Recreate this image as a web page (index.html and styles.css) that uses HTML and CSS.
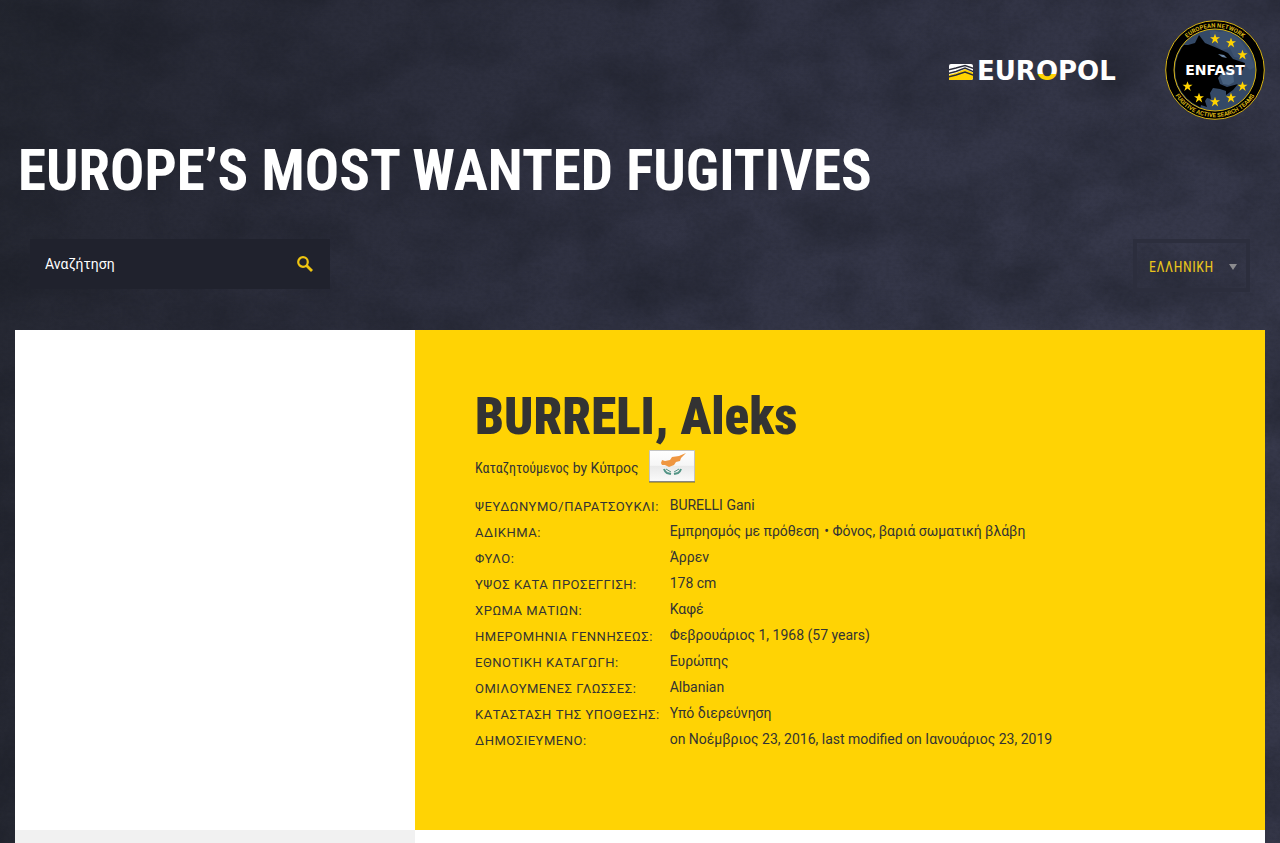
FILE: index.html
```html
<!DOCTYPE html>
<html lang="el">
<head>
<meta charset="utf-8">
<meta name="viewport" content="width=device-width, initial-scale=1">
<title>BURRELI, Aleks</title>
<link rel="stylesheet" href="styles.css">
</head>
<body>
<svg class="texture" aria-hidden="true">
  <filter id="stone" x="0" y="0" width="100%" height="100%" color-interpolation-filters="sRGB">
    <feTurbulence type="fractalNoise" baseFrequency="0.012 0.016" numOctaves="8" seed="8"/>
    <feColorMatrix values="0 0 0 0 0.08  0 0 0 0 0.09  0 0 0 0 0.12  0.8 0 0 0 -0.28"/>
  </filter>
  <filter id="grain" x="0" y="0" width="100%" height="100%" color-interpolation-filters="sRGB">
    <feTurbulence type="fractalNoise" baseFrequency="0.22 0.3" numOctaves="3" seed="3"/>
    <feColorMatrix values="0 0 0 0 0.08  0 0 0 0 0.09  0 0 0 0 0.12  0.25 0 0 0 -0.08"/>
  </filter>
  <rect width="100%" height="100%" filter="url(#stone)"/>
  <rect width="100%" height="100%" filter="url(#grain)"/>
</svg>
<div class="page">
  <header class="header">
    <div class="logos">
      <a class="logo" href="#europol" aria-label="Europol">
        <svg width="176" height="36" viewBox="0 0 176 36">
          <defs>
            <linearGradient id="oFill" x1="0" y1="0" x2="0" y2="1"><stop offset=".6" stop-color="#fff"/><stop offset=".6" stop-color="#ffd300"/></linearGradient>
            <clipPath id="mark"><path d="M3 12h20q2 0 2 2v12q0 2-2 2H1V14q0-2 2-2z"/></clipPath>
          </defs>
          <g clip-path="url(#mark)">
            <path fill="#fff" d="M0 11h26v18H0z"/>
            <path fill="#ffd300" d="M0 23l8-2 9-4 9 4v8H0z"/>
            <path fill="none" stroke="#292b39" stroke-width="1.400" d="M0 18l8-2 9-2.500 9 3M0 21.500l8-2 9-3.500 9 4M0 25l8-2 9-3 9 3.500"/>
          </g>
          <text class="wordmark" x="29" y="28">EUR<tspan fill="url(#oFill)">O</tspan>POL</text>
        </svg>
      </a>
      <a class="logo" href="#enfast" aria-label="ENFAST">
        <svg width="100" height="100" viewBox="0 0 100 100">
          <defs>
            <path id="star" d="M0-5.300 1.300-1.700H5L2 .6l1.200 3.800L0 2.100l-3.200 2.300L-2 .6-5-1.700h3.700z"/>
            <path id="arcTop" d="M7.500 50a42.500 42.500 0 0 1 85 0"/>
            <path id="arcBottom" d="M2.800 50a47.200 47.200 0 0 0 94.400 0"/>
            <clipPath id="disc"><circle cx="50" cy="50" r="40"/></clipPath>
          </defs>
          <circle cx="50" cy="50" r="49.300" fill="#000" stroke="#d8b414"/>
          <circle cx="50" cy="50" r="41" fill="#344966" stroke="#d8b414"/>
          <g clip-path="url(#disc)">
            <path fill="#3d5270" d="M44 9l10 3 9-1 12 9 10 15 5 12-5 3-6-6-3-6-7-1-4-9-8 2-7-5-4-7z"/>
            <path fill="#000" d="M8 27l8 1-1-3 8 0 7-2 4-8 6 8 12 5 11 5 5 6 12 4-1 4-2 4-2-5-5 1-13 5-4 6 2 6 7 3 11-3-5 6-7 5v-4l-6-2-7-1-3 5 1 6-4-1-2 3 2 6-6-2-2 10H5z"/>
            <path fill="#6b86a6" d="M53 34l6 1 3 3-5-1z"/>
            <path fill="#48617f" d="M55 56l8-5 5 1 1 10-5 3-6-1z"/>
          </g>
          <text class="seal-name" x="50" y="55">ENFAST</text>
          <g fill="#ffd300">
            <use href="#star" x="50" y="19"/><use href="#star" x="66" y="23"/><use href="#star" x="77.500" y="35"/>
            <use href="#star" x="22.500" y="66.500"/><use href="#star" x="34" y="78"/><use href="#star" x="50" y="82"/>
            <use href="#star" x="66" y="78"/><use href="#star" x="77.500" y="66.500"/>
          </g>
          <text class="seal-ring"><textPath href="#arcTop" startOffset="50%">EUROPEAN NETWORK</textPath></text>
          <text class="seal-ring"><textPath href="#arcBottom" startOffset="50%">FUGITIVE ACTIVE SEARCH TEAMS</textPath></text>
        </svg>
      </a>
    </div>
    <h1 class="site-title">EUROPE’S MOST WANTED FUGITIVES</h1>
    <div class="tools">
      <form class="search">
        <input class="search-input" type="text" placeholder="Αναζήτηση" aria-label="Αναζήτηση">
        <button class="search-button" type="button" aria-label="Υποβολή">
          <svg width="18" height="18" viewBox="0 0 18 18" fill="none" stroke="#efc510"><circle cx="7" cy="7" r="4.800" stroke-width="2.200"/><path d="M10.500 10.500 16 16" stroke-width="2.800"/></svg>
        </button>
      </form>
      <div class="language">
        <select class="language-select" aria-label="Γλώσσα"><option>ΕΛΛΗΝΙΚΗ</option></select>
        <svg class="language-arrow" width="8" height="6" viewBox="0 0 8 6"><path fill="#8c8c8f" d="M0 0h8L4 6z"/></svg>
      </div>
    </div>
  </header>
  <main class="profile">
    <div class="photo"></div>
    <section class="details">
      <h2 class="name">BURRELI, Aleks</h2>
      <div class="wanted">
        <span><span class="wanted-label">Καταζητούμενος</span> by Κύπρος</span>
        <svg class="flag" width="48" height="36" viewBox="0 1 48 36" role="img" aria-label="Κύπρος">
          <defs><linearGradient id="sheen" x2="0" y2="1"><stop stop-color="#fff"/><stop offset=".48" stop-color="#f6f6f6"/><stop offset=".5" stop-color="#e9e9e9"/><stop offset="1" stop-color="#fafafa"/></linearGradient></defs>
          <path fill="#8b7a32" opacity=".6" d="M1 31h46v3H1z"/>
          <path fill="url(#sheen)" stroke="#c4c4c4" d="M1.500 1.500h45v31h-45z"/>
          <path stroke="#858585" d="M1 32.500h46"/>
          <path fill="#ef9640" d="M13 14l1-3 3 1 5-1 2-3 7-1 7-3-5 5-1 3-4 1-2 3-5 2-4-2-3 0z"/>
          <path fill="none" stroke="#529485" stroke-width="2" d="M16 20q1 3 3 4l4 1M33 20q-1 3-3 4l-4 1"/>
          <path fill="none" stroke="#529485" d="M18 20l5 3m8-3-5 3"/>
        </svg>
      </div>
      <table class="facts">
        <tr><th scope="row">ΨΕΥΔΩΝΥΜΟ/ΠΑΡΑΤΣΟΥΚΛΙ:</th><td>BURELLI Gani</td></tr>
        <tr><th scope="row">ΑΔΙΚΗΜΑ:</th><td><ul class="offences"><li>Εμπρησμός με πρόθεση</li><li>Φόνος, βαριά σωματική βλάβη</li></ul></td></tr>
        <tr><th scope="row">ΦΥΛΟ:</th><td>Άρρεν</td></tr>
        <tr><th scope="row">ΥΨΟΣ ΚΑΤΑ ΠΡΟΣΕΓΓΙΣΗ:</th><td>178 cm</td></tr>
        <tr><th scope="row">ΧΡΩΜΑ ΜΑΤΙΩΝ:</th><td>Καφέ</td></tr>
        <tr><th scope="row">ΗΜΕΡΟΜΗΝΙΑ ΓΕΝΝΗΣΕΩΣ:</th><td>Φεβρουάριος 1, 1968 (57 years)</td></tr>
        <tr><th scope="row">ΕΘΝΟΤΙΚΗ ΚΑΤΑΓΩΓΗ:</th><td>Ευρώπης</td></tr>
        <tr><th scope="row">ΟΜΙΛΟΥΜΕΝΕΣ ΓΛΩΣΣΕΣ:</th><td>Albanian</td></tr>
        <tr><th scope="row">ΚΑΤΑΣΤΑΣΗ ΤΗΣ ΥΠΟΘΕΣΗΣ:</th><td>Υπό διερεύνηση</td></tr>
        <tr><th scope="row">ΔΗΜΟΣΙΕΥΜΕΝΟ:</th><td>on Νοέμβριος 23, 2016, last modified on Ιανουάριος 23, 2019</td></tr>
      </table>
    </section>
    <div class="below-photo"></div>
    <div class="below-details"></div>
  </main>
</div>
</body>
</html>
```

FILE: styles.css
```css
* { box-sizing: border-box; }
html { height: 100%; overflow: hidden; }
body {
  margin: 0;
  height: 100%;
  overflow: hidden;
  position: relative;
  color: #333;
  font: 14px/20px Roboto, "Noto Sans", sans-serif;
  background: radial-gradient(circle 1500px at 1200px 450px, #393b4e 0%, #313344 40%, #272935 75%, #21252c 100%);
}
.texture { position: absolute; inset: 0; width: 100%; height: 100%; }
.page { position: relative; min-height: 100%; padding: 0 15px; display: flex; flex-direction: column; }
.header { display: flex; flex-direction: column; }
.logos { display: flex; justify-content: flex-end; align-items: center; gap: 41px; padding-top: 20px; }
.logo { display: flex; }
.wordmark { font: bold 26px "DejaVu Sans", sans-serif; fill: #fff; }
.seal-name { font: bold 14px "DejaVu Sans", sans-serif; fill: #fff; text-anchor: middle; }
.seal-ring { font: bold 6px Roboto, sans-serif; fill: #d8b414; text-anchor: middle; }
.site-title { margin: 16px 0 0 3px; color: #fff; font: bold 57px/70px "Roboto Condensed", Roboto, sans-serif; white-space: nowrap; }
.tools { display: flex; justify-content: space-between; align-items: flex-start; padding: 33px 15px 38px; }
.search { display: flex; align-items: center; }
.search-input { width: 250px; height: 50px; padding: 0 15px; border: 0; background: #20222d; color: #fff; font: inherit; }
.search-input::placeholder { color: #fff; opacity: 1; }
.search-button { width: 50px; height: 50px; padding: 0; border: 0; background: #20222d; display: grid; place-items: center; }
.language { position: relative; display: flex; }
.language-select {
  appearance: none; width: 117px; height: 53px; padding: 3px 12px 0; border: 4px solid #2c2e3d;
  background: transparent; color: #e9c51c; font: 14px/20px "Roboto Condensed", Roboto, sans-serif; letter-spacing: 0.04em;
}
.language-arrow { position: absolute; right: 13px; top: 25px; pointer-events: none; }
.profile { flex: 1; display: grid; grid-template-columns: 32% 1fr; grid-template-rows: 500px 1fr; }
.photo, .below-details { background: #fff; }
.below-photo { background: #f1f1f1; }
.details { background: #ffd304; padding: 57px 60px 0; }
.name { margin: 0; font: 900 51px/60px "Roboto Condensed", Roboto, sans-serif; }
.wanted { display: flex; align-items: center; gap: 9px; height: 42px; }
.wanted-label { font-family: "Roboto Condensed", Roboto, sans-serif; }
.facts { border-collapse: collapse; margin-top: 3px; }
.facts th, .facts td { padding: 3px 0; text-align: left; font-weight: 400; vertical-align: top; white-space: nowrap; }
.facts th { padding: 5px 10px 1px 0; font-size: 13px; letter-spacing: 0.04em; }
.offences { display: flex; gap: 5px; margin: 0; padding: 0; list-style: none; }
.offences li + li::before { content: "• "; }
```
